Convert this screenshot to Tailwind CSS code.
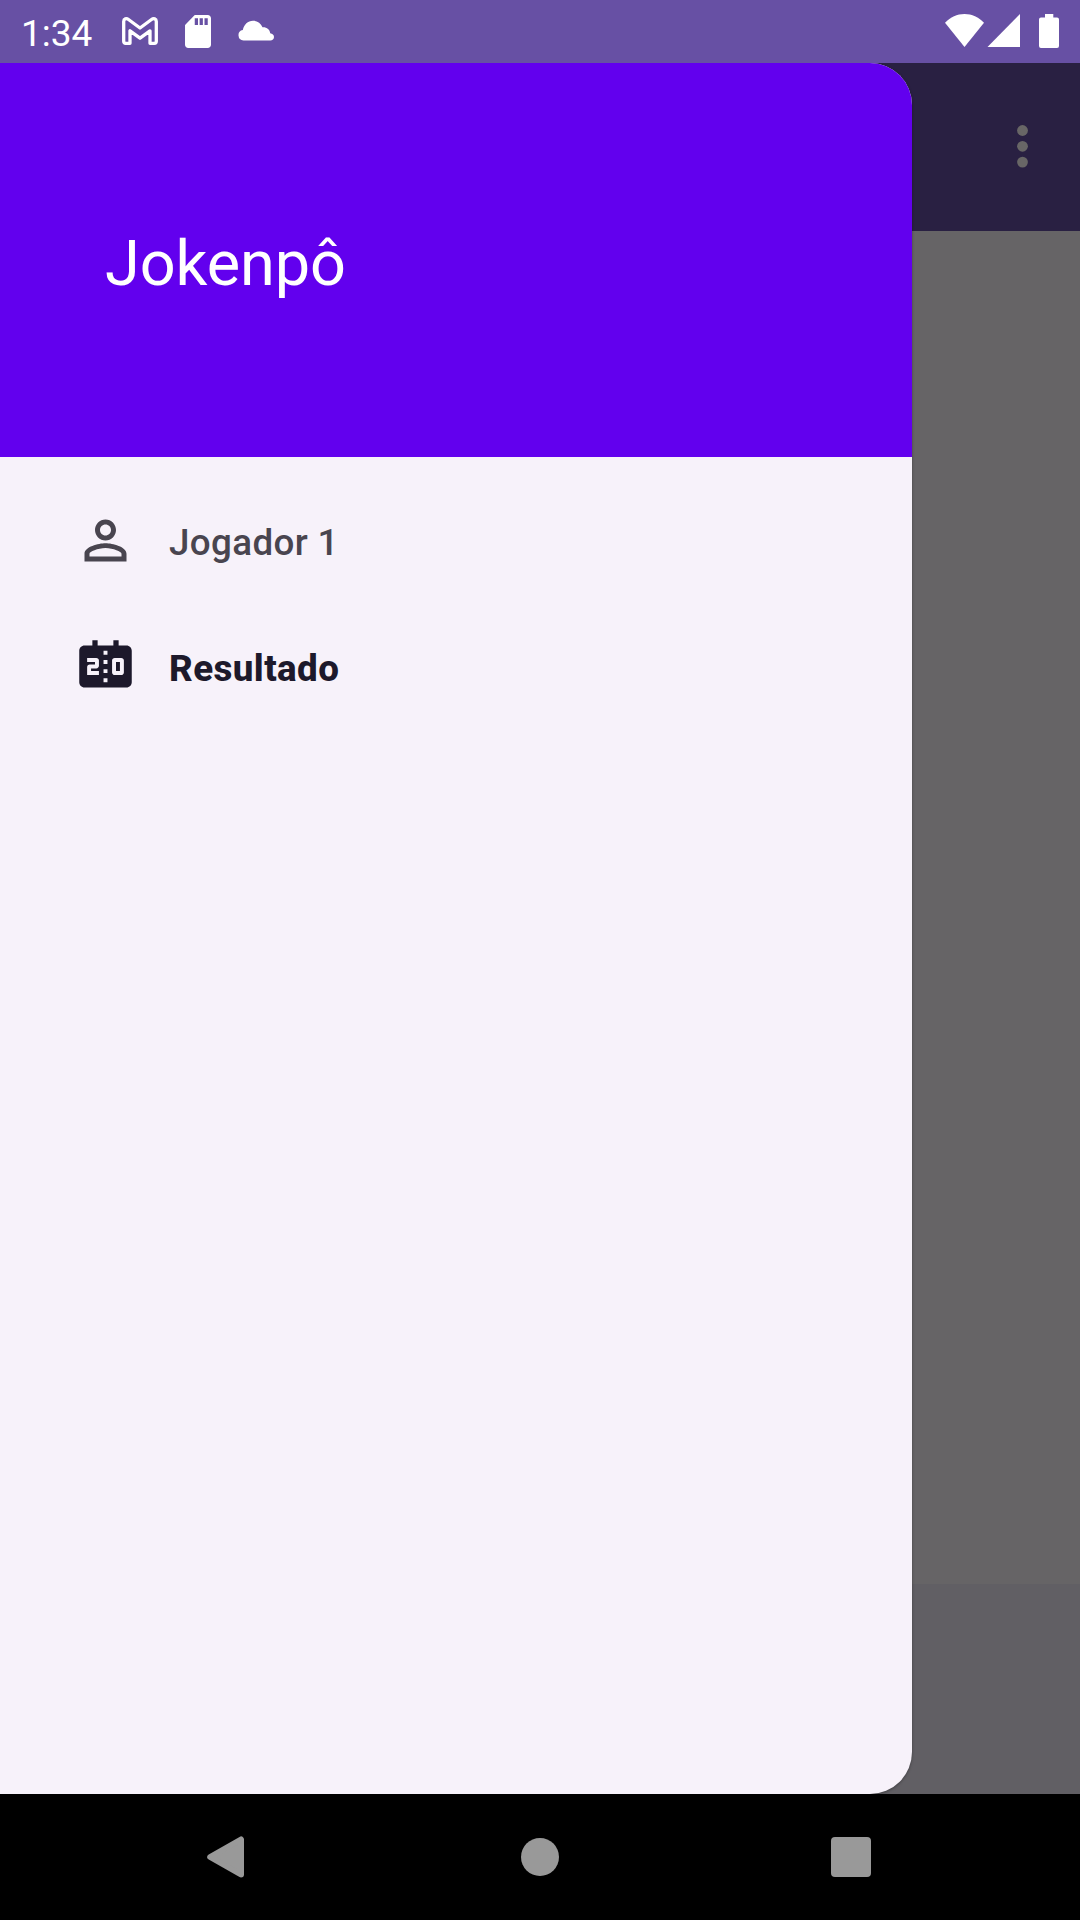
<!DOCTYPE html>
<html lang="pt-BR">
<head>
<meta charset="utf-8">
<title>Jokenpô</title>
<script src="https://cdn.jsdelivr.net/npm/@tailwindcss/browser@4"></script>
</head>
<body class="w-[1080px] h-[1920px] overflow-hidden bg-black font-['Roboto',sans-serif] flex flex-col">
  <!-- Status bar -->
  <header class="h-[63px] shrink-0 bg-[#6750a4] text-white flex items-start">
    <span class="ml-[21px] w-[101px] pt-3 text-[37px] leading-[44px] whitespace-nowrap">1:34</span>
    <svg class="mt-[17px] w-9 h-7 shrink-0" viewBox="0 0 36 28" fill="none" stroke="currentColor" stroke-width="3.3" stroke-linejoin="round"><path d="M1.700 4.500C1.700 1.700 4.300.9 6.500 2.500L18 11 29.500 2.500C31.700.9 34.300 1.700 34.300 4.500V24.300Q34.300 26.300 32.300 26.300H28V13.800L18 21.200 8 13.800V26.300H3.700Q1.700 26.300 1.700 24.300Z"/></svg>
    <svg class="ml-[27px] mt-[15px] w-[26px] h-[33px] shrink-0" viewBox="4 2 16 20" preserveAspectRatio="none" fill="currentColor"><path d="M18 2h-8L4.020 8 4 20c0 1.100.9 2 2 2h12c1.100 0 2-.9 2-2V4c0-1.100-.9-2-2-2zm-6 6h-2V4h2v4zm3 0h-2V4h2v4zm3 0h-2V4h2v4z"/></svg>
    <svg class="ml-[27px] mt-5 w-9 h-[21px] shrink-0" viewBox="0 0 36 21" fill="currentColor"><path d="M5.500 20.500A5.300 5.300 0 0 1 4.800 10C6 4.500 9.800.7 15 .7c4.300 0 7.800 2.500 9.500 6.500 4.300-.3 7.300 2.300 7.700 6 2.200.3 3.800 1.800 3.800 3.700 0 2-1.600 3.600-3.700 3.600z"/></svg>
    <svg class="ml-auto mt-[14px] w-[39px] h-[33px] shrink-0" viewBox="0 0 39 33" fill="currentColor"><path d="M0 8.800C5.500 3 12 0 19.500 0S33.500 3 39 8.800L19.500 33z"/></svg>
    <svg class="ml-[3px] mt-[14px] w-[33px] h-[33px] shrink-0" viewBox="0 0 33 33" fill="currentColor"><path d="M33 0v33H.5z"/></svg>
    <svg class="ml-[19px] mr-[21px] mt-[14px] w-5 h-[34px] shrink-0" viewBox="0 0 20 34" fill="currentColor"><path d="M6 0h8.300v3.400H18q2 0 2 2V32q0 2-2 2H2q-2 0-2-2V5.400q0-2 2-2h4z"/></svg>
  </header>

  <div class="relative flex-1 flex flex-col overflow-hidden">
    <!-- Dimmed activity -->
    <div class="h-[168px] shrink-0 bg-[#292042] flex items-center justify-end pr-[52px] pb-0.5">
      <svg class="w-[11px] h-[43px]" viewBox="0 0 11 43" fill="#686666"><circle cx="5.500" cy="5.500" r="5.400"/><circle cx="5.500" cy="21.300" r="5.400"/><circle cx="5.500" cy="37.100" r="5.400"/></svg>
    </div>
    <main class="flex-1 bg-[#666466]"></main>
    <div class="h-[210px] shrink-0 bg-[#615f64]"></div>

    <!-- Navigation drawer -->
    <aside class="absolute inset-y-0 left-0 w-[912px] bg-[#f7f2fa] rounded-r-[42px] overflow-hidden shadow-[0_1px_3px_rgba(0,0,0,0.35)]">
      <div class="h-[394px] bg-[#6200ee] pl-[105px] pt-[164px]">
        <h1 class="text-[63px] leading-[74px] tracking-[-0.1px] text-white">Jokenpô</h1>
      </div>
      <nav class="pt-[23px]">
        <a class="h-[126px] flex items-center pl-[74px] gap-8 text-[#49454f]">
          <svg class="w-[63px] h-[63px] -mt-[5px]" viewBox="0 0 24 24" fill="currentColor"><path d="M12 5.900c1.160 0 2.100.94 2.100 2.100s-.94 2.100-2.100 2.100S9.900 9.160 9.900 8s.94-2.100 2.100-2.100m0 9c2.970 0 6.100 1.460 6.100 2.100v1.100H5.900V17c0-.64 3.130-2.100 6.100-2.100M12 4C9.790 4 8 5.790 8 8s1.790 4 4 4 4-1.790 4-4-1.790-4-4-4zm0 9c-2.670 0-8 1.340-8 4v3h16v-3c0-2.660-5.330-4-8-4z"/></svg>
          <span class="text-[36.75px] leading-[44px] font-medium tracking-[0.37px]">Jogador 1</span>
        </a>
        <a class="h-[126px] flex items-center pl-[74px] gap-8 text-[#1d192b]">
          <svg class="w-[63px] h-[63px] -mt-[5px]" viewBox="0 0 24 24" fill="currentColor" fill-rule="evenodd"><path d="M20 4h-3V2h-2v2H9V2H7v2H4c-1.100 0-2 .9-2 2v12c0 1.100.9 2 2 2h16c1.100 0 2-.9 2-2V6c0-1.100-.9-2-2-2zM9.500 11.750c0 .55-.45 1-1 1h-2v1h3v1.500H5v-3c0-.55.45-1 1-1h2v-1H5v-1.500h3.500c.55 0 1 .45 1 1zM12.750 18h-1.500v-1.500h1.500zm0-3.500h-1.500V13h1.500zm0-3.500h-1.500V9.500h1.500zm0-3.500h-1.500V6h1.500zM19 14.250c0 .55-.45 1-1 1h-2.500c-.55 0-1-.45-1-1v-4.500c0-.55.45-1 1-1H18c.55 0 1 .45 1 1zM17.500 10.250H16v3.500h1.500z"/></svg>
          <span class="text-[36.75px] leading-[44px] font-extrabold tracking-[0.4px]">Resultado</span>
        </a>
      </nav>
    </aside>
  </div>

  <!-- System navigation -->
  <footer class="h-[126px] shrink-0 bg-black text-[#999] flex items-center">
    <svg class="ml-[207px] w-[37px] h-[42px]" viewBox="0 0 37 42" fill="currentColor" stroke="currentColor" stroke-width="6" stroke-linejoin="round"><path d="M34 3.500v35L3.200 21z"/></svg>
    <div class="ml-[277px] size-[38px] rounded-full bg-[#999]"></div>
    <div class="ml-[272px] size-10 rounded-[4px] bg-[#999]"></div>
  </footer>
</body>
</html>
